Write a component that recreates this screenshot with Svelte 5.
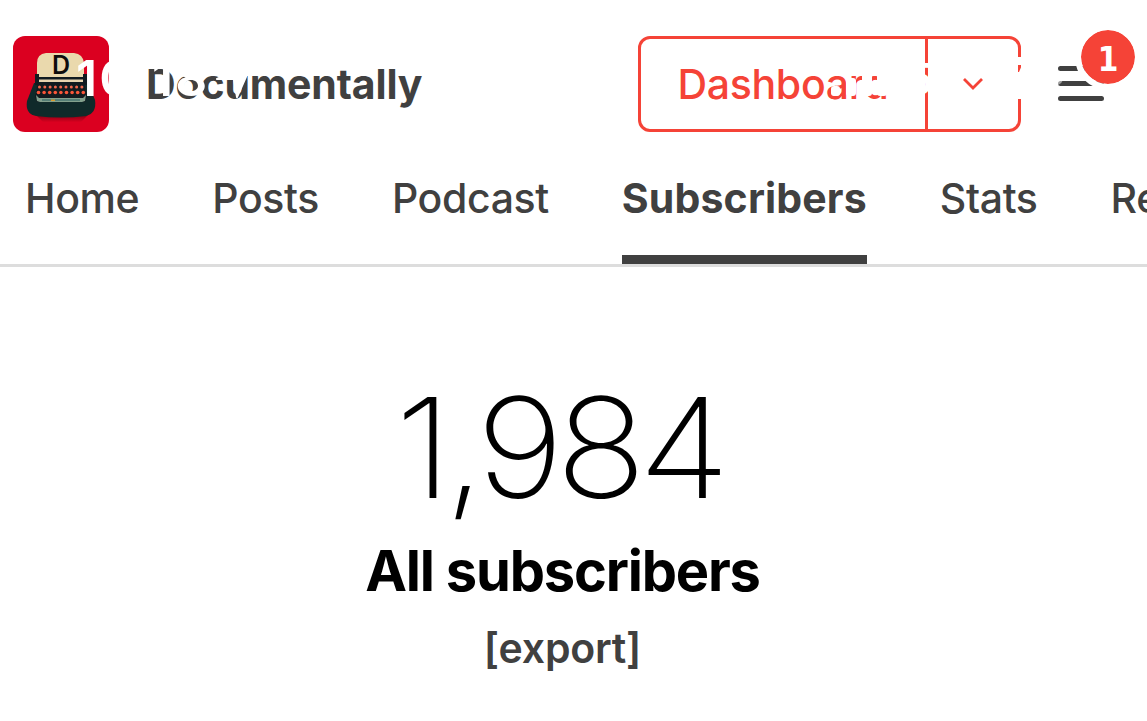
<script>
    const tabs = ["Home", "Posts", "Podcast", "Subscribers", "Stats", "Recommendations"];
    const keys = Array.from({length: 9}, (_, i)=>i);

    let active = $state("Subscribers");
    let subscribers = $state(1984);
    let notifications = $state(1);
</script>

<div class="Dashboard">
    <div class="statusBar">
        <span class="time">10:18</span>
        <svg class="location" width="38" height="40" viewBox="0 0 38 40">
            <path d="M36 2 1 18h17l3 18z" fill="white" stroke="white" stroke-width="2" stroke-linejoin="round"/>
        </svg>
        <svg class="signal" width="56" height="36" viewBox="0 0 56 36" fill="white">
            <rect x="0" y="26" width="9" height="10" rx="3"/>
            <rect x="15" y="18" width="10" height="18" rx="3"/>
            <rect x="31" y="9" width="10" height="27" rx="3"/>
            <rect x="46" y="0" width="10" height="36" rx="3"/>
        </svg>
        <span class="network">5G</span>
        <svg class="battery" width="78" height="42" viewBox="0 0 78 42">
            <path d="M12 0H58a12 12 0 0 1 12 12V30a12 12 0 0 1-12 12H12A12 12 0 0 1 0 30V12A12 12 0 0 1 12 0zM31 8v7h2l3-7z" fill="white" fill-rule="evenodd"/>
            <path d="M72 14q5 2 5 7t-5 7z" fill="white" opacity=".5"/>
        </svg>
    </div>

    <header>
        <svg class="logo" width="96" height="96" viewBox="0 0 96 96">
            <defs>
                <linearGradient id="shade" x2="0" y2="1">
                    <stop stop-color="#7a0012"/>
                    <stop offset="1" stop-color="#d9001f"/>
                </linearGradient>
            </defs>
            <rect width="96" height="96" rx="12" fill="#db0020"/>
            <path d="M22 78h54l-8 8H30z" fill="url(#shade)"/>
            <path d="M21 47 14 65q-2 13 9 15 25 3 50 0 11-3 9-16L75 47z" fill="#102a2a"/>
            <path d="M24 42V27q0-9 9-10h28q9 1 10 10v15z" fill="#ead9ad"/>
            <path d="M22 38h4v3h44v-3h4v11H22z" fill="#111b20"/>
            <rect x="26" y="43.500" width="44" height="2.500" fill="#e8d5b0"/>
            <path d="M25 46h1v1h44v-1h1l3 15-2 5H24l-2-5z" fill="#131b1f"/>
            <path d="M23 59l3 3h44l3-3-1 6-3 1H27l-3-1z" fill="#83a08d"/>
            <path d="M29 63h38v2H29z" fill="#568077"/>
            <rect x="38" y="63.500" width="4" height="1.500" fill="#d79b2c"/>
            {#each keys as key}
                <circle cx={26.500 + key * 5.300} cy="51" r="1.500" fill="#f4694d"/>
                <circle cx={25.500 + key * 5.600} cy="56.500" r="1.800" fill="#fb5638"/>
            {/each}
            <text x="48" y="38" text-anchor="middle">D</text>
        </svg>
        <h1>Documentally</h1>

        <div class="buttons">
            <button class="dashboardBtn">Dashboard</button>
            <button class="dropdownBtn" aria-label="More">
                <svg width="22" height="14" viewBox="0 0 22 14">
                    <path d="M2 2l9 9 9-9" fill="none" stroke="currentColor" stroke-width="2.800"/>
                </svg>
            </button>
        </div>

        <button class="menu" aria-label="Menu">
            <svg width="46" height="36" viewBox="0 0 46 36">
                <path d="M2.500 2.500h41M2.500 17.500h41M2.500 32.500h41" stroke="#404040" stroke-width="5" stroke-linecap="round"/>
            </svg>
            <span class="badge">{notifications}</span>
        </button>
    </header>

    <nav>
        {#each tabs as tab}
            <button class="tab" class:active={tab === active} onclick={()=>{active = tab}}>{tab}</button>
        {/each}
    </nav>

    <main>
        <p class="count">{subscribers.toLocaleString("en-US")}</p>
        <h2>All subscribers</h2>
        <button class="export">[export]</button>
    </main>
</div>

<style>
    :global(body){
        background: white;
    }

    .Dashboard{
        position: relative;
        width: 100%;
        height: 721px;
        overflow: hidden;
        font-family: Inter, "Liberation Sans", sans-serif;
        color: #404040;
    }

    button{
        padding: 0;
        border: none;
        background: none;
        color: inherit;
        font: inherit;
        cursor: pointer;
    }

    h1, h2, p{
        margin: 0;
    }

    .statusBar{
        position: absolute;
        z-index: 1;
        top: 54px;
        left: 76px;
        display: flex;
        align-items: center;
        width: 988px;
        height: 48px;
        color: white;
        font-size: 50px;
        font-weight: 600;
        line-height: 48px;
        pointer-events: none;
    }

    .time{
        width: 140px;
        letter-spacing: 2px;
    }

    .location{
        margin-top: 6px;
    }

    .signal{
        margin-left: auto;
    }

    .network{
        margin: 0 22px 0 18px;
        padding-top: 2px;
        font-size: 44px;
        letter-spacing: -1px;
    }

    header{
        display: flex;
        align-items: center;
        height: 96px;
        padding: 36px 43px 0 13px;
    }

    .logo text{
        font-size: 25px;
        font-weight: 600;
        fill: #0d0d0d;
    }

    h1{
        margin-left: 37px;
        font-size: 41px;
        font-weight: 700;
        letter-spacing: -0.15px;
    }

    .buttons{
        display: flex;
        box-sizing: border-box;
        width: 383px;
        height: 96px;
        margin-left: auto;
        border: 3px solid #f54337;
        border-radius: 12px;
        color: #f54337;
    }

    .dashboardBtn{
        width: 284px;
        font-size: 41px;
        font-weight: 450;
        letter-spacing: -0.3px;
    }

    .dropdownBtn{
        display: flex;
        align-items: center;
        justify-content: center;
        flex-grow: 1;
        border-left: 3px solid #f54337;
    }

    .menu{
        position: relative;
        display: flex;
        margin-left: 37px;
    }

    .badge{
        position: absolute;
        top: -42px;
        left: 17px;
        width: 54px;
        height: 54px;
        border: 6px solid white;
        border-radius: 50%;
        background: #f54337;
        background-clip: padding-box;
        color: white;
        font: bold 33px/60px "DejaVu Sans Condensed", "DejaVu Sans", sans-serif;
        text-align: center;
    }

    nav{
        display: flex;
        gap: 73px;
        height: 132px;
        padding-left: 25px;
        border-bottom: 3px solid #dddddd;
    }

    .tab{
        box-sizing: border-box;
        height: 132px;
        padding-top: 8px;
        border-bottom: 9px solid transparent;
        font-size: 41px;
        font-weight: 450;
        letter-spacing: -0.38px;
        white-space: nowrap;
    }

    .tab.active{
        border-bottom-color: #404040;
        font-weight: 700;
        letter-spacing: 0.15px;
    }

    main{
        display: flex;
        flex-direction: column;
        align-items: center;
        padding: 101px 22px 0 0;
        color: black;
    }

    .count{
        margin-right: 8px;
        font-size: 139px;
        font-weight: 200;
        line-height: 160px;
        letter-spacing: -7.5px;
        transform: scaleX(1.08);
    }

    h2{
        margin-top: 7px;
        font-size: 56px;
        font-weight: 700;
        line-height: 72px;
        letter-spacing: -1.2px;
    }

    .export{
        margin-top: 16px;
        color: #404040;
        font-size: 41px;
        font-weight: 600;
        line-height: 50px;
        letter-spacing: -0.2px;
    }
</style>
